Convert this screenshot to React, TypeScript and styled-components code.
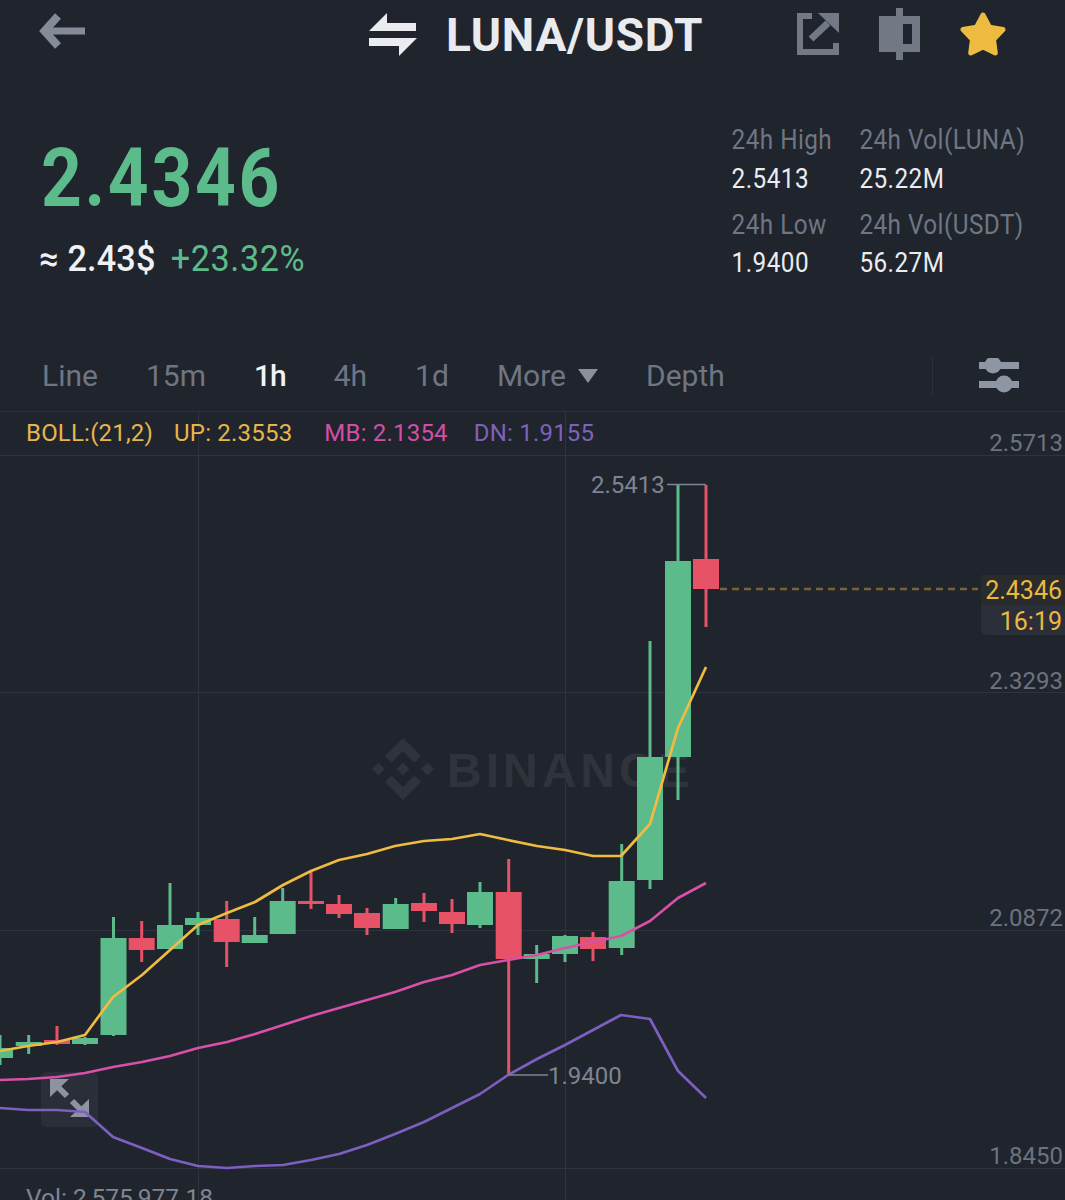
import React from 'react';
import styled, { createGlobalStyle } from 'styled-components';

const GlobalStyle = createGlobalStyle`
  html, body {
    margin: 0;
    padding: 0;
    background: #20242d;
  }
`;

const Page = styled.div`
  width: 1065px;
  height: 1200px;
  overflow: hidden;
  background: #20242d;
  color: #eaecef;
  font-family: Roboto, 'Liberation Sans', sans-serif;
`;

const Header = styled.header`
  display: flex;
  align-items: center;
  height: 68px;
  padding-left: 39px;
  padding-right: 58px;
`;

const Icon = styled.svg`
  display: block;
  flex: none;
`;

const TitleGroup = styled.div`
  display: flex;
  align-items: center;
  gap: 29px;
  margin-left: 284px;
`;

const Title = styled.h1`
  margin: 2px 0 0;
  font-size: 46px;
  font-weight: 700;
  line-height: 68px;
  letter-spacing: 0.7px;
  color: #e9ebee;
`;

const Actions = styled.div`
  display: flex;
  align-items: center;
  gap: 40px;
  margin-left: auto;
`;

const Summary = styled.section`
  display: flex;
  justify-content: space-between;
  height: 272px;
  padding: 0 40px 0 39px;
`;

const PriceBlock = styled.div`
  padding-top: 66px;
`;

const LastPrice = styled.div`
  margin-left: 2px;
  font-size: 81px;
  font-weight: 700;
  line-height: 90px;
  letter-spacing: 3px;
  color: #5cbb8a;
  transform: scaleX(0.88);
  transform-origin: left center;
`;

const Fiat = styled.div`
  display: flex;
  gap: 16px;
  margin-top: 13px;
  font-size: 36px;
  line-height: 44px;
  transform: scaleX(0.95);
  transform-origin: left center;
`;

const Approx = styled.span`
  color: #f0f1f3;
  font-weight: 500;
  letter-spacing: 0.2px;
`;

const Change = styled.span`
  color: #5cbb8a;
  letter-spacing: 0.6px;
`;

const Stats = styled.div`
  display: grid;
  grid-template-columns: 142px auto;
  row-gap: 7.5px;
  align-self: flex-start;
  padding-top: 53px;
  font-size: 27px;
  letter-spacing: 0.5px;
  transform: scaleX(0.9);
  transform-origin: right center;
`;

const Stat = styled.div`
  display: flex;
  flex-direction: column;
`;

const StatLabel = styled.span`
  line-height: 38.5px;
  color: #6f7683;
`;

const StatValue = styled.span`
  line-height: 38.5px;
  color: #eaecef;
`;

const Tabs = styled.nav`
  display: flex;
  align-items: center;
  height: 72px;
  padding-left: 42px;
  padding-right: 46px;
  gap: 48px;
  border-bottom: 1px solid #2c3039;
  box-sizing: border-box;
`;

const Tab = styled.span<{ $active?: boolean }>`
  display: flex;
  align-items: center;
  gap: 12px;
  font-size: 30px;
  color: ${(p) => (p.$active ? '#f2f3f5' : '#6f7683')};
  font-weight: ${(p) => (p.$active ? 500 : 400)};
  letter-spacing: ${(p) => (p.$active ? '-1px' : '0')};
`;

const TabTools = styled.div`
  display: flex;
  align-items: center;
  gap: 46px;
  margin-left: auto;
`;

const Divider = styled.div`
  width: 1px;
  height: 40px;
  background: #2c3039;
`;

const Chart = styled.section`
  position: relative;
  height: 788px;
  overflow: hidden;
`;

const ChartSvg = styled.svg`
  display: block;
`;

const AxisText = styled.text`
  font-family: Roboto, sans-serif;
  font-size: 24px;
  fill: #6c7380;
`;

const ExtremeText = styled(AxisText)`
  fill: #7e8591;
`;

const Watermark = styled.text`
  font-family: 'Liberation Sans', sans-serif;
  font-size: 48px;
  font-weight: 700;
  letter-spacing: 4px;
  fill: #2f333c;
`;

const VolumeText = styled(AxisText)`
  fill: #7e8591;
  font-size: 24.5px;
`;

const Legend = styled.div`
  position: absolute;
  top: 7px;
  left: 26px;
  display: flex;
  gap: 22px;
  font-family: Roboto, sans-serif;
  font-size: 24px;
  letter-spacing: 0.2px;
  line-height: 28px;
`;

const LegendItem = styled.span<{ $color: string; $gap?: number }>`
  color: ${(p) => p.$color};
  margin-left: ${(p) => p.$gap ?? 0}px;
`;

const PriceTag = styled.div`
  position: absolute;
  top: 163px;
  right: 0;
  width: 84px;
  font-family: Roboto, sans-serif;
  font-size: 25px;
  color: #edb83f;
  text-align: right;
`;

const PriceTagRow = styled.div<{ $bottom?: boolean }>`
  height: 30px;
  padding-right: 3px;
  line-height: ${(p) => (p.$bottom ? '34px' : '32px')};
  background: ${(p) => (p.$bottom ? '#2a2f3a' : '#2a2b2d')};
  border-bottom-left-radius: ${(p) => (p.$bottom ? '6px' : '0')};
`;

type Candle = [number, number, number, number, number, 'g' | 'r'];

// x, wick top, wick bottom, body top, body bottom, colour
const candles: Candle[] = [
  [0, 1035, 1065, 1048, 1058, 'g'],
  [28.7, 1035, 1054, 1042, 1046, 'g'],
  [57, 1026, 1045, 1040, 1044, 'r'],
  [85, 1037, 1045, 1038, 1044, 'g'],
  [113.5, 917, 1036, 938, 1035, 'g'],
  [141.7, 921, 962, 938, 950, 'r'],
  [170, 883, 949, 925, 949, 'g'],
  [198, 912, 935, 918, 925, 'g'],
  [226.7, 901, 967, 919, 942, 'r'],
  [254.7, 917, 943, 935, 943, 'g'],
  [282.7, 888, 934, 901, 934, 'g'],
  [311, 870, 909, 901, 904, 'r'],
  [339, 895, 918, 904, 914, 'r'],
  [367, 908, 935, 913, 928, 'r'],
  [395.7, 898, 929, 904, 929, 'g'],
  [424, 893, 922, 903, 911, 'r'],
  [452, 899, 933, 912, 924, 'r'],
  [480, 882, 928, 892, 925, 'g'],
  [508.7, 859, 1075, 892, 959, 'r'],
  [536.7, 945, 983, 954, 959, 'g'],
  [565, 935, 962, 936, 954, 'g'],
  [593, 932, 961, 937, 949, 'r'],
  [621.7, 844, 955, 881, 948, 'g'],
  [650, 641, 889, 757, 880, 'g'],
  [678, 485, 800, 561, 757, 'g'],
  [706, 485, 627, 559, 589, 'r'],
];

const up =
  '0,1051 28,1046 57,1042 85,1035 113,997 142,975 170,950 198,925 227,913 255,902 283,885 311,871 339,860 367,854 395,846 424,841 452,839 480,834 508,840 537,846 565,850 593,856 621,856 650,824 678,728 706,667';
const mb =
  '0,1080 28,1079 57,1077 85,1073 113,1067 142,1062 170,1056 198,1048 227,1042 255,1034 283,1025 311,1016 339,1008 367,1000 395,992 424,982 452,975 480,965 508,960 537,955 565,948 593,942 621,936 650,921 678,898 706,883';
const dn =
  '0,1108 28,1110 57,1110 85,1112 113,1137 142,1148 170,1159 198,1166 227,1168 255,1166 283,1165 311,1160 339,1154 367,1145 395,1134 424,1122 452,1108 480,1094 508,1075 537,1059 565,1045 593,1030 621,1015 650,1019 678,1071 706,1098';

const axis: [string, number][] = [
  ['2.5713', 451],
  ['2.3293', 689],
  ['2.0872', 926],
  ['1.8450', 1164],
];

const CandleMark: React.FC<{ c: Candle }> = ({ c }) => {
  const [x, wickTop, wickBottom, top, bottom, tone] = c;
  const fill = tone === 'g' ? '#5cbb8a' : '#e85267';
  return (
    <g fill={fill}>
      <rect x={x - 1.5} y={wickTop} width={3} height={wickBottom - wickTop} />
      <rect x={x - 13} y={top} width={26} height={bottom - top} />
    </g>
  );
};

const BinanceLogo = () => (
  <g fill="#2f333c" transform="translate(403 769)">
    <polygon points="0,-31 18,-13 11.5,-6.5 0,-18 -11.5,-6.5 -18,-13" />
    <polygon points="0,31 18,13 11.5,6.5 0,18 -11.5,6.5 -18,13" />
    <polygon points="-31,0 -24.5,-6.5 -18,0 -24.5,6.5" />
    <polygon points="31,0 24.5,-6.5 18,0 24.5,6.5" />
    <polygon points="0,-6.5 6.5,0 0,6.5 -6.5,0" />
  </g>
);

export default function App() {
  return (
    <Page>
      <GlobalStyle />
      <Header>
        <Icon width={46} height={68} viewBox="39 0 46 68">
          <path d="M58 16 L44.5 31 L58 46" fill="none" stroke="#858b98" strokeWidth={8} />
          <rect x={48} y={27.5} width={37} height={7} fill="#858b98" />
        </Icon>
        <TitleGroup>
          <Icon width={48} height={68} viewBox="369 0 48 68">
            <polygon points="387,13 369,31 416,31 416,23 387,23" fill="#eaecef" />
            <polygon points="369,38 417,38 399,56 399,46 369,46" fill="#eaecef" />
          </Icon>
          <Title>LUNA/USDT</Title>
        </TitleGroup>
        <Actions>
          <Icon width={42} height={68} viewBox="797 0 42 68">
            <path d="M812 16 H800 V52 H836 V43" fill="none" stroke="#737885" strokeWidth={6} />
            <polygon points="818,13 839,13 839,33" fill="#737885" />
            <path d="M828 23 L811 39" fill="none" stroke="#737885" strokeWidth={7} />
          </Icon>
          <Icon width={41} height={68} viewBox="880 0 41 68">
            <rect x={897} y={8} width={7} height={52} fill="#737885" />
            <path
              fillRule="evenodd"
              d="M880 16 H921 V52 H880 Z M904 24 V44 H913 V24 Z"
              fill="#737885"
            />
          </Icon>
          <Icon width={47} height={68} viewBox="960 0 47 68">
            <polygon
              points="983,15 989.5,27.1 1003,29.5 993.5,39.4 995.3,53 983,47 970.7,53 972.5,39.4 963,29.5 976.5,27.1"
              fill="#eebb40"
              stroke="#eebb40"
              strokeWidth={5}
              strokeLinejoin="round"
            />
          </Icon>
        </Actions>
      </Header>

      <Summary>
        <PriceBlock>
          <LastPrice>2.4346</LastPrice>
          <Fiat>
            <Approx>≈ 2.43$</Approx>
            <Change>+23.32%</Change>
          </Fiat>
        </PriceBlock>
        <Stats>
          <Stat>
            <StatLabel>24h High</StatLabel>
            <StatValue>2.5413</StatValue>
          </Stat>
          <Stat>
            <StatLabel>24h Vol(LUNA)</StatLabel>
            <StatValue>25.22M</StatValue>
          </Stat>
          <Stat>
            <StatLabel>24h Low</StatLabel>
            <StatValue>1.9400</StatValue>
          </Stat>
          <Stat>
            <StatLabel>24h Vol(USDT)</StatLabel>
            <StatValue>56.27M</StatValue>
          </Stat>
        </Stats>
      </Summary>

      <Tabs>
        <Tab>Line</Tab>
        <Tab>15m</Tab>
        <Tab $active>1h</Tab>
        <Tab>4h</Tab>
        <Tab>1d</Tab>
        <Tab>
          More
          <Icon width={20} height={14} viewBox="0 0 20 14">
            <polygon points="0,0 20,0 10,14" fill="#8a909c" />
          </Icon>
        </Tab>
        <Tab>Depth</Tab>
        <TabTools>
          <Divider />
          <Icon width={40} height={36} viewBox="979 357 40 36">
            <g fill="#8f96a3">
              <rect x={979} y={361} width={40} height={7} />
              <circle cx={993} cy={364} r={8.5} />
              <rect x={979} y={380} width={40} height={7} />
              <circle cx={1004} cy={383} r={8.5} />
            </g>
          </Icon>
        </TabTools>
      </Tabs>

      <Chart>
        <ChartSvg width={1065} height={788} viewBox="0 412 1065 788">
          <BinanceLogo />
          <Watermark x={447} y={787}>
            BINANCE
          </Watermark>
          <g stroke="#2f333d" strokeWidth={1}>
            {[455.5, 692.5, 930.5, 1168.5].map((y) => (
              <line key={y} x1={0} x2={1065} y1={y} y2={y} />
            ))}
            {[198.5, 565.5].map((x) => (
              <line key={x} x1={x} x2={x} y1={412} y2={1200} />
            ))}
          </g>

          <rect x={41} y={1072} width={57} height={55} rx={5} fill="#2a2e38" />
          <g fill="#8d93a0">
            <polygon points="50,1079 69,1079 50,1097" />
            <polygon points="89,1117 70,1117 89,1099" />
          </g>
          <g stroke="#8d93a0" strokeWidth={6}>
            <line x1={57} y1={1086} x2={67} y2={1096} />
            <line x1={72} y1={1101} x2={82} y2={1111} />
          </g>

          {candles.map((c) => (
            <CandleMark key={c[0]} c={c} />
          ))}

          <g fill="none" strokeWidth={2.7} strokeLinejoin="round">
            <polyline points={up} stroke="#efbb40" />
            <polyline points={mb} stroke="#d850a8" />
            <polyline points={dn} stroke="#7d5fc0" />
          </g>

          <line x1={720} x2={978} y1={589} y2={589} stroke="#766438" strokeWidth={2.5} strokeDasharray="7 5" />

          <g stroke="#7e8591" strokeWidth={1.5}>
            <line x1={667} x2={706} y1={484.5} y2={484.5} />
            <line x1={509} x2={548} y1={1075} y2={1075} />
          </g>
          <ExtremeText x={591} y={493}>
            2.5413
          </ExtremeText>
          <ExtremeText x={548} y={1084}>
            1.9400
          </ExtremeText>

          {axis.map(([label, y]) => (
            <AxisText key={label} x={1063} y={y} textAnchor="end">
              {label}
            </AxisText>
          ))}

          <VolumeText x={26} y={1206}>
            Vol: 2,575,977.18
          </VolumeText>
        </ChartSvg>

        <Legend>
          <LegendItem $color="#e5b64a">BOLL:(21,2)</LegendItem>
          <LegendItem $color="#e5b64a" $gap={-1}>
            UP: 2.3553
          </LegendItem>
          <LegendItem $color="#d24fa6" $gap={10}>
            MB: 2.1354
          </LegendItem>
          <LegendItem $color="#7d62bb" $gap={4}>
            DN: 1.9155
          </LegendItem>
        </Legend>

        <PriceTag>
          <PriceTagRow>2.4346</PriceTagRow>
          <PriceTagRow $bottom>16:19</PriceTagRow>
        </PriceTag>
      </Chart>
    </Page>
  );
}
